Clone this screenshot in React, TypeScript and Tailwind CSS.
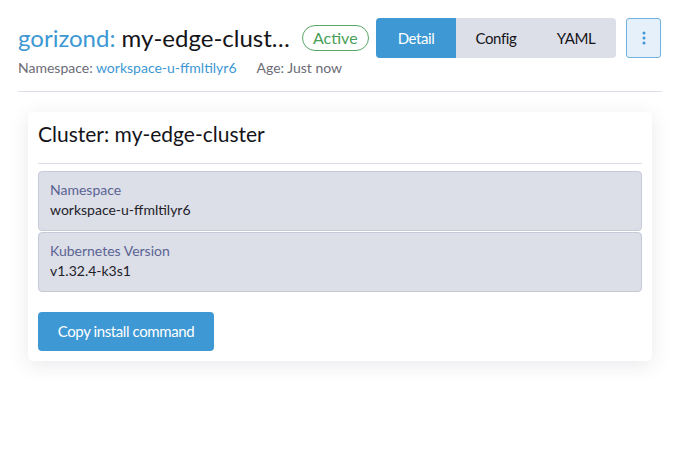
import React from 'react';

const fields = [
  { label: 'Namespace', value: 'workspace-u-ffmltilyr6' },
  { label: 'Kubernetes Version', value: 'v1.32.4-k3s1' },
];

const tabs = ['Detail', 'Config', 'YAML'];

export default function App() {
  return (
    <div className="min-h-screen bg-white text-[#141419]" style={{ fontFamily: 'Lato, "Noto Sans", sans-serif' }}>
      <div className="pl-[18px] pr-[17px] pt-[18px]">
        {/* Header */}
        <div className="flex items-start justify-between border-b border-[#dcdee7] pb-[13px] pr-px">
          <div className="flex flex-col">
            <div className="flex h-10 items-center">
              <h1 className="w-[272px] truncate text-[24px] leading-10">
                <span className="text-[#3d98d3]">gorizond:</span> my-edge-cluster
              </h1>
              <span className="ml-3 rounded-full border border-[#5aa867] px-[10px] text-[16px] leading-6 text-[#4a9f58]">
                Active
              </span>
            </div>
            <div className="flex gap-5 text-[14px] leading-5 text-[#6c6c76]">
              <span>
                Namespace: <a className="text-[#3d98d3]">workspace-u-ffmltilyr6</a>
              </span>
              <span>Age: Just now</span>
            </div>
          </div>
          <div className="flex items-center gap-[10px]">
            <div className="flex h-10 overflow-hidden rounded bg-[#dddfe8]">
              {tabs.map((t, i) => (
                <button
                  key={t}
                  className={
                    i === 0
                      ? 'w-[80px] bg-[#3d98d3] text-[15px] tracking-[-0.4px] text-white'
                      : 'w-[80px] text-[15px] tracking-[-0.4px] text-[#141419]'
                  }
                >
                  {t}
                </button>
              ))}
            </div>
            <button className="flex h-10 w-[35px] items-center justify-center rounded-[3px] border border-[#6fb1e0] bg-[#e6f0fa]">
              <svg width="4" height="14" viewBox="0 0 4 14" fill="#3d98d3">
                <circle cx="2" cy="2" r="1.5" />
                <circle cx="2" cy="7" r="1.5" />
                <circle cx="2" cy="12" r="1.5" />
              </svg>
            </button>
          </div>
        </div>

        {/* Card */}
        <div className="mx-[10px] mt-5 rounded-[5px] bg-white px-[10px] pb-[10px] pt-[8px] shadow-[0_4px_20px_rgba(40,40,70,0.10)]">
          <h2 className="text-[21px] leading-[28px] text-[#141419]">Cluster: my-edge-cluster</h2>
          <div className="mt-[15px] border-t border-[#dcdee7]" />
          <div className="mt-[7px] flex flex-col gap-px">
            {fields.map((f) => (
              <div key={f.label} className="h-[60px] rounded border border-[#c6c9d8] bg-[#dcdee8] px-[11px] pt-[8px]">
                <div className="text-[14px] leading-5 text-[#5a6492]">{f.label}</div>
                <div className="text-[14px] leading-5 text-[#222228]">{f.value}</div>
              </div>
            ))}
          </div>
          <button className="mt-[20px] h-[39px] w-[176px] rounded bg-[#3d98d3] text-[15px] tracking-[-0.4px] text-white">
            Copy install command
          </button>
        </div>
      </div>
    </div>
  );
}
